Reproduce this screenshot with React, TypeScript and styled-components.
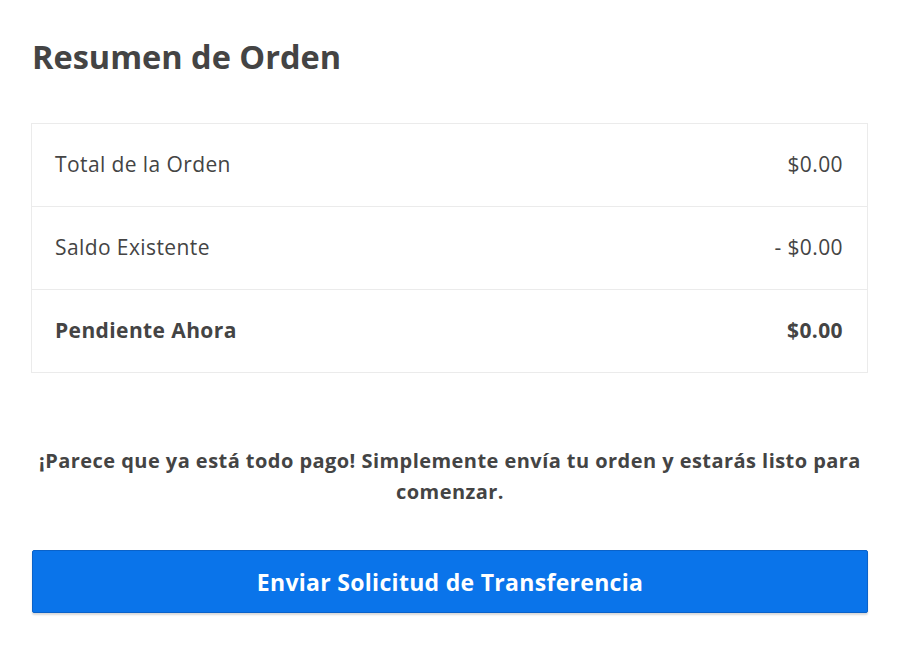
import styled, { createGlobalStyle } from 'styled-components';

const GlobalStyle = createGlobalStyle`
    *, *::before, *::after {
        box-sizing: border-box;
    }
    body {
        margin: 0;
        background: #ffffff;
        font-family: "Open Sans", sans-serif;
        color: #444444;
    }
`

interface Line {
    label: string
    amount: string
    strong?: boolean
}

const lines: Line[] = [
    { label: 'Total de la Orden', amount: '$0.00' },
    { label: 'Saldo Existente', amount: '- $0.00' },
    { label: 'Pendiente Ahora', amount: '$0.00', strong: true },
];

const App = () => {
    return (
        <Page>
            <GlobalStyle />
            <Title>Resumen de Orden</Title>
            <Summary>
                {lines.map((line) => (
                    <Row key={line.label}>
                        <Cell strong={line.strong}>{line.label}</Cell>
                        <Cell strong={line.strong}>{line.amount}</Cell>
                    </Row>
                ))}
            </Summary>
            <Message>
                ¡Parece que ya está todo pago! Simplemente envía tu orden y estarás listo para comenzar.
            </Message>
            <SubmitButton type='button'>Enviar Solicitud de Transferencia</SubmitButton>
        </Page>
    );
}

const Page = styled.div`
    width: 900px;
    padding: 34px 32px 40px 32px;
    display: flex;
    flex-direction: column;
`

const Title = styled.h1`
    margin: 0;
    font-family: "Open Sans", sans-serif;
    font-size: 32.5px;
    line-height: 46px;
    font-weight: 700;
    color: #444444;
`

const Summary = styled.div`
    margin-top: 43px;
    margin-left: -1px;
    width: 837px;
    border: 1px solid #ebebeb;
`

const Row = styled.div`
    display: flex;
    justify-content: space-between;
    align-items: center;
    height: 82px;
    padding: 0 24px 2px 23px;
    & + & {
        height: 83px;
        border-top: 1px solid #ebebeb;
    }
`

const Cell = styled.span<{ strong?: boolean }>`
    font-size: 21px;
    letter-spacing: 0.4px;
    font-weight: ${({ strong }) => (strong ? 700 : 400)};
    color: #444444;
`

const Message = styled.p`
    margin: 72px 0 0 0;
    text-align: center;
    font-size: 20px;
    letter-spacing: 0.45px;
    line-height: 31px;
    font-weight: 700;
    color: #444444;
`

const SubmitButton = styled.button`
    margin-top: 43px;
    height: 63px;
    width: 836px;
    border: 1px solid #0a62c9;
    border-radius: 2px;
    background: #0a74ea;
    color: #ffffff;
    font-family: "Open Sans", sans-serif;
    font-size: 23px;
    letter-spacing: 0.3px;
    font-weight: 700;
    box-shadow: 0 2px 2px rgba(0, 0, 0, 0.15);
    cursor: pointer;
`

export default App;
